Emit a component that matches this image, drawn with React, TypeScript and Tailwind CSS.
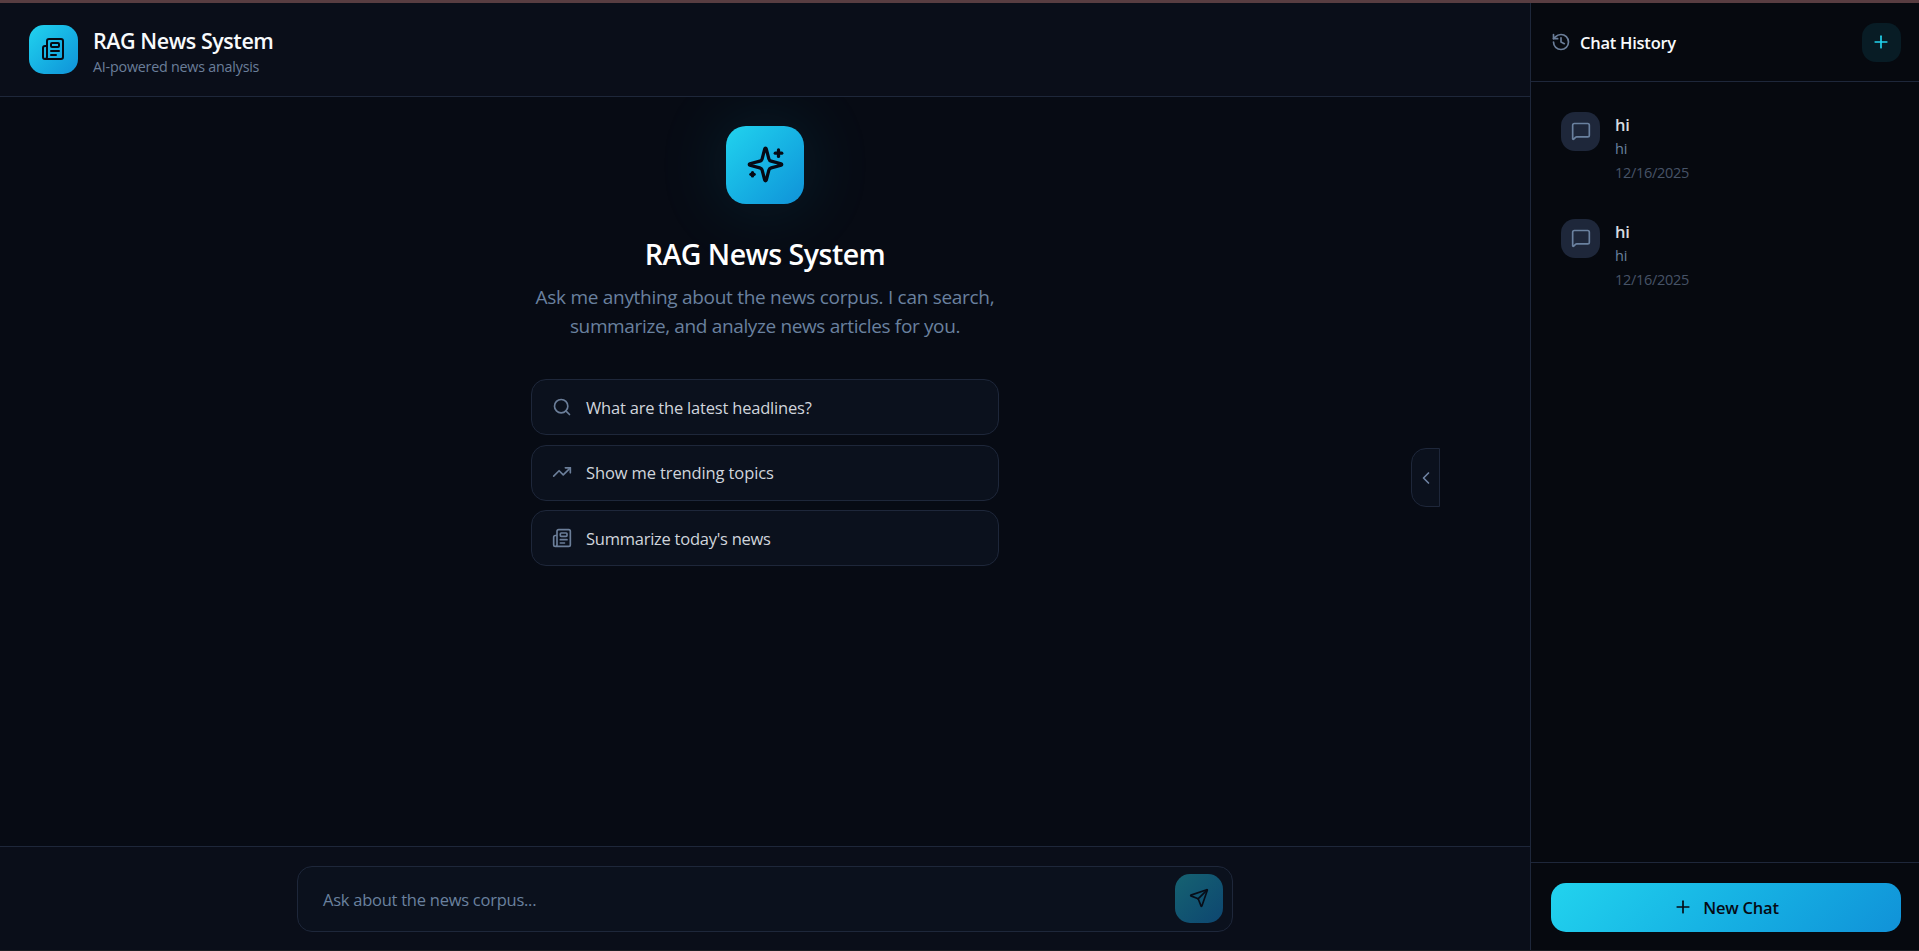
import { ChevronLeft, History, MessageSquare, Newspaper, Plus, Search, Send, TrendingUp } from "lucide-react";

const suggestions = [
    { icon: Search, text: "What are the latest headlines?", tracking: "tracking-[-0.2px]" },
    { icon: TrendingUp, text: "Show me trending topics", tracking: "tracking-[-0.12px]" },
    { icon: Newspaper, text: "Summarize today's news", tracking: "tracking-[-0.25px]" },
];

const chats = [
    { id: 1, title: "hi", preview: "hi", date: "12/16/2025" },
    { id: 2, title: "hi", preview: "hi", date: "12/16/2025" },
];

function SparklesIcon({ className }: { className?: string }) {
    return (
        <svg viewBox="0 0 24 24" fill="none" stroke="currentColor" strokeWidth="2" strokeLinecap="round" strokeLinejoin="round" className={className}>
            <path d="M9.937 15.5A2 2 0 0 0 8.5 14.063l-6.135-1.582a.5.5 0 0 1 0-.962L8.5 9.936A2 2 0 0 0 9.937 8.5l1.582-6.135a.5.5 0 0 1 .963 0L14.063 8.5A2 2 0 0 0 15.5 9.937l6.135 1.581a.5.5 0 0 1 0 .964L15.5 14.063a2 2 0 0 0-1.437 1.437l-1.582 6.135a.5.5 0 0 1-.963 0z" />
            <path d="M20 3v4" />
            <path d="M22 5h-4" />
            <path d="M4 17v2" />
            <path d="M5 18H3" />
        </svg>
    );
}

function Header() {
    return (
        <header className="flex h-[94px] shrink-0 items-center gap-[15px] border-b border-[#1e273a] bg-[#0a0e19] pl-[29px]">
            <div className="flex size-[49px] items-center justify-center rounded-[15px] bg-linear-135 from-[#22d3ee] to-[#1192d8] pr-px pb-px">
                <Newspaper className="size-6 text-[#060a14]" />
            </div>
            <div className="whitespace-nowrap pt-[7px]">
                <h1 className="text-[21.5px] leading-[27px] font-semibold tracking-[-0.45px] text-[#f8fafc]">RAG News System</h1>
                <p className="text-[14.3px] leading-[25px] tracking-[-0.22px] text-[#6b7e99]">AI-powered news analysis</p>
            </div>
        </header>
    );
}

function Welcome() {
    return (
        <main className="flex min-h-0 flex-1 flex-col items-center overflow-hidden pt-[29px]">
            <div className="flex size-[78px] shrink-0 items-center justify-center rounded-[20px] bg-linear-135 from-[#22d3ee] to-[#1192d8] pb-px shadow-[0_0_75px_rgba(34,211,238,0.13)]">
                <SparklesIcon className="size-[39px] text-[#060a14]" />
            </div>
            <h2 className="mt-[30px] text-[28.5px] leading-[40px] font-semibold whitespace-nowrap tracking-[-0.5px] text-white">RAG News System</h2>
            <p className="mt-[9px] text-center text-[19px] leading-[29px] whitespace-nowrap text-[#6a819f]">
                <span className="tracking-[-0.29px]">Ask me anything about the news corpus. I can search,</span>
                <br />
                <span className="tracking-[-0.36px]">summarize, and analyze news articles for you.</span>
            </p>
            <div className="mt-[38px] flex w-[468px] flex-col gap-[9.6px]">
                {suggestions.map(({ icon: Icon, text, tracking }) => (
                    <button key={text} className="flex h-[56px] items-center gap-[14px] rounded-[15px] border border-[#1e273a] bg-[#0b111d] pl-[20px]">
                        <Icon className="mb-px size-5 text-[#6b7e99]" />
                        <span className={`pt-[2px] text-[16.5px] whitespace-nowrap text-[#d0d5dc] ${tracking}`}>{text}</span>
                    </button>
                ))}
            </div>
        </main>
    );
}

function Composer() {
    return (
        <footer className="flex h-[105px] shrink-0 justify-center border-t border-[#1e273a] bg-[#0a0e19] pt-[19px]">
            <div className="flex h-[66px] w-[936px] items-center justify-between rounded-[15px] border border-[#1e273a] bg-[#0b111d] pr-[9px] pl-[25px]">
                <span className="pt-[3px] text-[16.5px] tracking-[-0.25px] text-[#6a819f]">Ask about the news corpus...</span>
                <button className="mb-px flex h-[49px] w-[48px] items-center justify-center rounded-[15px] bg-linear-135 from-[#166271] to-[#0e4670] pb-px">
                    <Send className="size-5 text-[#070d18]" />
                </button>
            </div>
        </footer>
    );
}

function Sidebar() {
    return (
        <aside className="flex w-[389px] shrink-0 flex-col border-l border-[#1e273a] bg-[#06090f]">
            <div className="flex h-[79px] shrink-0 items-center border-b border-[#1e273a] pr-[18px] pl-[20px]">
                <History className="size-5 text-[#6b7e99]" />
                <h2 className="ml-[9px] pt-[2px] text-[16.5px] font-semibold whitespace-nowrap tracking-[-0.25px] text-[#f8fafc]">Chat History</h2>
                <button className="ml-auto flex size-[39px] items-center justify-center rounded-[14px] bg-[#081c25] pr-[2px] pb-px">
                    <Plus className="size-5 text-[#22d3ee]" />
                </button>
            </div>
            <div className="flex flex-1 flex-col gap-[39px] pt-[30px] pl-[30px]">
                {chats.map((chat) => (
                    <div key={chat.id} className="flex h-[68px] gap-[15px]">
                        <div className="flex size-[39px] items-center justify-center rounded-[14px] bg-[#1e273a] pb-px">
                            <MessageSquare className="size-5 text-[#6a819f]" />
                        </div>
                        <div className="whitespace-nowrap">
                            <p className="text-[16.5px] leading-[25px] font-semibold tracking-[-0.3px] text-[#d8dbe0]">{chat.title}</p>
                            <p className="text-[14.5px] leading-[23px] tracking-[-0.2px] text-[#6a819f]">{chat.preview}</p>
                            <p className="text-[14.5px] leading-[26px] tracking-[-0.3px] text-[#465367]">{chat.date}</p>
                        </div>
                    </div>
                ))}
            </div>
            <div className="h-[89px] shrink-0 border-t border-[#1e273a] pt-[20px] pr-[18px] pl-[20px]">
                <button className="flex h-[49px] w-full items-center justify-center gap-[10px] rounded-[15px] bg-linear-135 from-[#22d3ee] to-[#1192d8] text-[#060a14]">
                    <Plus className="mb-px size-5" />
                    <span className="pt-px text-[16.5px] font-semibold tracking-[-0.2px]">New Chat</span>
                </button>
            </div>
        </aside>
    );
}

export default function App() {
    return (
        <div className="relative flex h-[951px] w-[1919px] flex-col overflow-hidden bg-[#070b14] font-['Open_Sans','Noto_Sans',sans-serif]">
            <div className="h-[3px] shrink-0 bg-[#583d41]" />
            <div className="flex min-h-0 flex-1">
                <div className="flex flex-1 flex-col">
                    <Header />
                    <Welcome />
                    <Composer />
                </div>
                <Sidebar />
            </div>
            <button className="absolute top-[448px] left-[1411px] flex h-[59px] w-[29px] items-center justify-center rounded-l-[15px] border border-[#1e273a] bg-[#0b111d]">
                <ChevronLeft className="size-5 text-[#6f83a3]" />
            </button>
            <div className="absolute inset-x-0 bottom-0 h-px bg-[#1c1d22]" />
        </div>
    );
}
